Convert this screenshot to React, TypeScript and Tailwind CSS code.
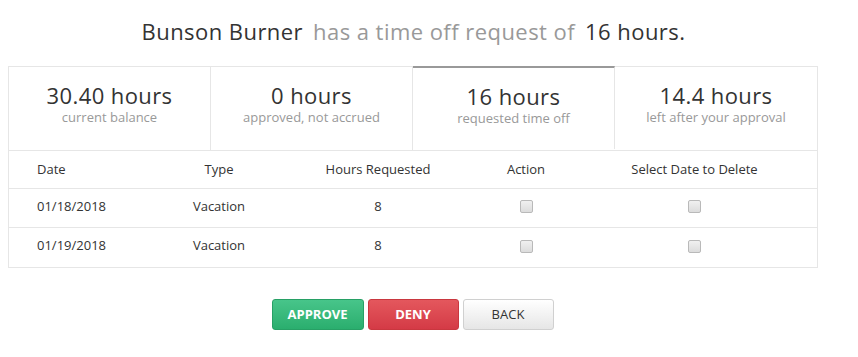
import React from "react";

const stats = [
  { value: "30.40 hours", label: "current balance" },
  { value: "0 hours", label: "approved, not accrued" },
  { value: "16 hours", label: "requested time off", active: true },
  { value: "14.4 hours", label: "left after your approval" },
];

const rows = [
  { date: "01/18/2018", type: "Vacation", hours: "8" },
  { date: "01/19/2018", type: "Vacation", hours: "8" },
];

const cols = "grid grid-cols-[141px_138px_180px_116px_221px]";

function Box() {
  return (
    <span className="block h-[13px] w-[13px] rounded-[2px] border border-[#b9b9b9] bg-gradient-to-b from-[#f0f0f0] to-[#dcdcdc]" />
  );
}

export default function App() {
  return (
    <div className="w-[858px] h-[357px] bg-white text-[#333] font-['Open_Sans',sans-serif]">
      <h1 className="flex justify-center gap-[10px] pt-[16px] pr-[31px] text-[22px] leading-[30px] tracking-[0.45px]">
        <span>Bunson Burner</span>
        <span className="text-[#999]">has a time off request of</span>
        <span>16 hours.</span>
      </h1>

      <div className="mx-[8px] mt-[20px] w-[810px] border border-[#e6e6e6]">
        <div className="grid grid-cols-4 border-b border-[#e6e6e6]">
          {stats.map((s, i) => (
            <div
              key={s.label}
              className={
                "flex h-[83px] flex-col items-center pt-[14px] " +
                (i < 3 ? "border-r border-[#e6e6e6] " : "") +
                (s.active ? "-mt-px border-t-2 border-t-[#999]" : "")
              }
            >
              <div className="text-[22px] leading-[28px] tracking-[0.4px]">{s.value}</div>
              <div className="text-[13px] leading-[16px] text-[#999]">{s.label}</div>
            </div>
          ))}
        </div>

        <div className={cols + " h-[38px] items-center border-b border-[#e6e6e6] text-[13px]"}>
          <div className="pl-[28px]">Date</div>
          <div className="text-center">Type</div>
          <div className="text-center">Hours Requested</div>
          <div className="text-center">Action</div>
          <div className="text-center">Select Date to Delete</div>
        </div>
        {rows.map((r, i) => (
          <div
            key={r.date}
            className={
              cols +
              " h-[39px] items-center pb-[3px] text-[13px]" +
              (i < rows.length - 1 ? " border-b border-[#e6e6e6]" : "")
            }
          >
            <div className="pl-[28px]">{r.date}</div>
            <div className="text-center">{r.type}</div>
            <div className="text-center">{r.hours}</div>
            <div className="flex justify-center"><Box /></div>
            <div className="flex justify-center"><Box /></div>
          </div>
        ))}
      </div>

      <div className="mt-[31px] flex justify-center gap-[4px] pr-[33px] text-[13px]">
        <button className="h-[31px] w-[92px] rounded-[3px] border border-[#27a065] bg-gradient-to-b from-[#47c58a] to-[#2aae6e] font-bold text-white">
          APPROVE
        </button>
        <button className="h-[31px] w-[91px] rounded-[3px] border border-[#c9373f] bg-gradient-to-b from-[#e4575d] to-[#d43a46] font-bold text-white">
          DENY
        </button>
        <button className="h-[31px] w-[91px] rounded-[3px] border border-[#d0d0d0] bg-gradient-to-b from-white to-[#e6e6e6] text-[#333]">
          BACK
        </button>
      </div>
    </div>
  );
}
